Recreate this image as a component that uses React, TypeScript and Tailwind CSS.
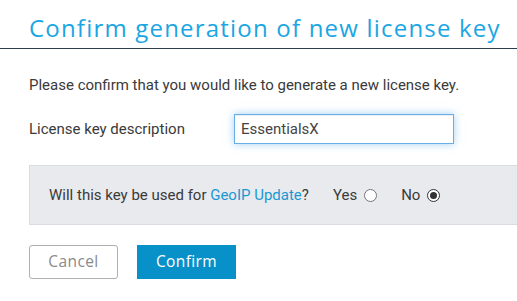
export default function App() {
  return (
    <div className="w-[517px] h-[301px] overflow-hidden bg-white font-['Roboto',sans-serif] text-[#333]">
      <h1 className="pl-[29px] pt-[14px] pb-[6px] border-b border-[#2c3e4c] font-['Open_Sans',sans-serif] text-[24px] leading-[28px] font-normal text-[#1ba6e3] tracking-[1.2px]">
        Confirm generation of new license key
      </h1>

      <div className="pl-[29px] pt-[26px]">
        <p className="text-[15px] leading-[20px] text-[#3a3a3a]">
          Please confirm that you would like to generate a new license key.
        </p>

        <div className="mt-[19px] flex items-center">
          <label className="w-[205px] text-[15px] text-[#3a3a3a]">License key description</label>
          <input
            defaultValue="EssentialsX"
            className="w-[220px] h-[30px] px-[6px] border border-[#66afe9] text-[15px] text-[#444] outline-none shadow-[inset_0_1px_1px_rgba(0,0,0,0.075),0_0_8px_rgba(102,175,233,0.6)]"
          />
        </div>

        <div className="mt-[21px] h-[60px] bg-[#e8eaee] border border-r-0 border-[#d9dde2] flex items-center pl-[19px] text-[15px] text-[#3a3a3a]">
          <span>
            Will this key be used for <a className="text-[#1b98d3]">GeoIP Update</a>?
          </span>
          <span className="ml-[24px] flex items-center gap-[7px]">
            Yes
            <span className="w-[13px] h-[13px] rounded-full border border-[#767676] bg-white" />
          </span>
          <span className="ml-[24px] flex items-center gap-[7px]">
            No
            <span className="w-[13px] h-[13px] rounded-full border border-[#333] bg-white flex items-center justify-center">
              <span className="w-[7px] h-[7px] rounded-full bg-[#333]" />
            </span>
          </span>
        </div>

        <div className="mt-[20px] flex gap-[19px] font-['Open_Sans',sans-serif] text-[15.5px] tracking-[0.4px]">
          <button className="w-[89px] h-[34px] rounded-[3px] border border-[#aeb0b3] text-[#8a8a8a]">
            Cancel
          </button>
          <button className="w-[99px] h-[34px] bg-[#0890c8] text-white">Confirm</button>
        </div>
      </div>
    </div>
  );
}
